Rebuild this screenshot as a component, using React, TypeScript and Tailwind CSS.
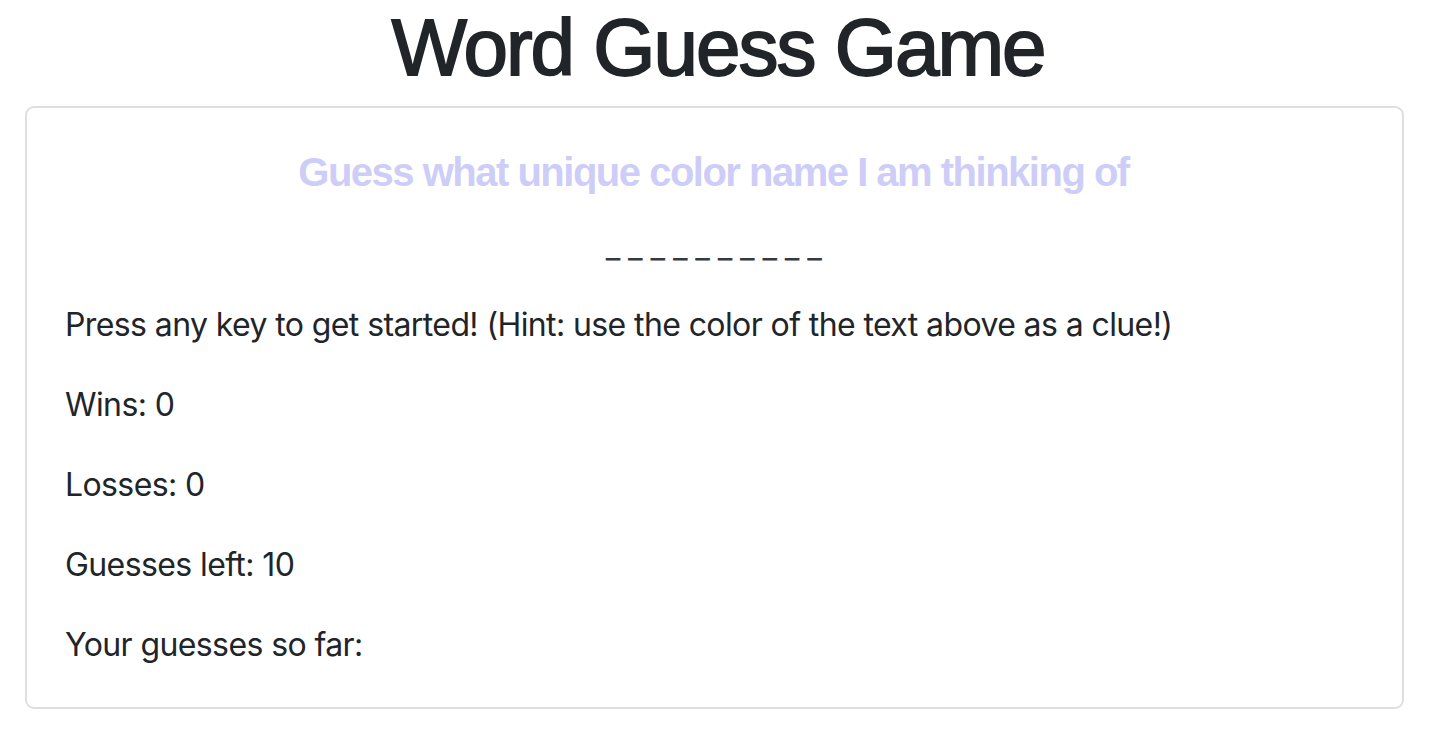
export default function App() {
  const blanks = Array.from({ length: 10 }, () => "_").join(" ");

  return (
    <div className="min-h-screen bg-white text-[#212529] font-['Inter','Noto_Sans',sans-serif]">
      {/* Title: medium weight, approximated with regular + a thin stroke */}
      <h1 className="text-center font-['Liberation_Sans',Arial,sans-serif] font-normal text-[80px] leading-[96px] tracking-[-2px] [-webkit-text-stroke:1.8px_#212529] mb-[10px]">
        Word Guess Game
      </h1>

      <div className="ml-[25px] w-[1379px] rounded-[9px] border-2 border-[#dfdfdf] pt-[40px] pb-[38px] pl-[38px] pr-[40px]">
        <h5 className="text-center font-['Liberation_Sans',Arial,sans-serif] font-bold text-[40px] leading-[48px] tracking-[-1.5px] text-[#cdcdf8] mb-[27px]">
          Guess what unique color name I am thinking of
        </h5>
        <p className="text-center text-[32px] leading-[48px] tracking-[-0.6px] mb-[30px] whitespace-pre text-[#343a40]">{blanks}</p>
        <p className="text-[32px] leading-[48px] tracking-[-0.6px] mb-8">
          Press any key to get started! (Hint: use the color of the text above as a clue!)
        </p>
        <p className="text-[32px] leading-[48px] tracking-[-0.6px] mb-8">Wins: 0</p>
        <p className="text-[32px] leading-[48px] tracking-[-0.6px] mb-8">Losses: 0</p>
        <p className="text-[32px] leading-[48px] tracking-[-0.6px] mb-8">Guesses left: 10</p>
        <p className="text-[32px] leading-[48px] tracking-[-0.6px]">Your guesses so far:</p>
      </div>
    </div>
  );
}
